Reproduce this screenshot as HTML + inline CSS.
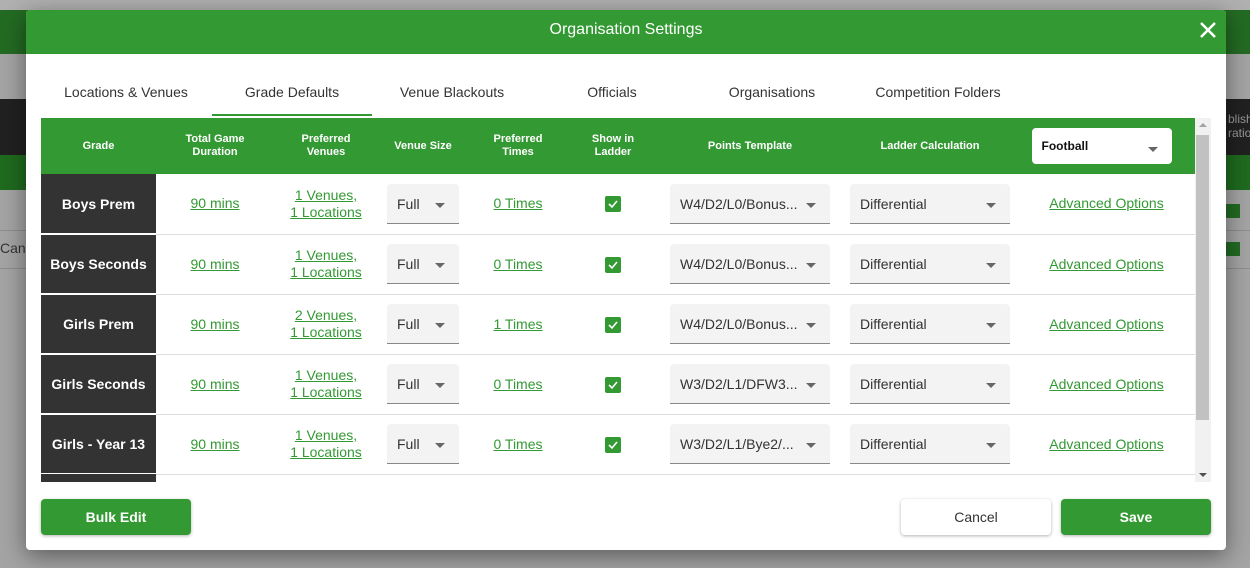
<!DOCTYPE html>
<html><head><meta charset="utf-8"><style>
*{box-sizing:border-box;margin:0;padding:0}
body{width:1250px;height:568px;overflow:hidden;background:#a4a4a4;font-family:"Liberation Sans",Arial,sans-serif;position:relative}
.abs{position:absolute}
.modal{position:absolute;left:26px;top:10px;width:1200px;height:540px;background:#fff;border-radius:4px;box-shadow:0 6px 24px rgba(0,0,0,.45);overflow:hidden}
.hdr{height:44px;background:#339933;color:#fff;font-size:16px;text-align:center;line-height:40px}
.x{position:absolute;right:8px;top:10px;width:20px;height:20px}
.tabs{position:absolute;top:72px;left:0;width:100%;font-size:14px;color:#333}
.tabs span{position:absolute;top:2px;transform:translateX(-50%);white-space:nowrap}
.ul{position:absolute;left:186px;top:104px;width:160px;height:2px;background:#339933}
table{position:absolute;left:15px;top:108px;border-collapse:collapse;table-layout:fixed;width:1154px}
th{background:#339933;color:#fff;font-size:11px;font-weight:bold;height:56px;text-align:center;line-height:13px}
td{height:60px;border-bottom:1px solid #ddd;text-align:center;font-size:14px;color:#333}
td.g{background:#333;color:#fff;font-weight:bold;border-bottom:2px solid #fff}
a{color:#339933;text-decoration:underline;font-size:14px;line-height:17px}
.sel{display:inline-block;position:relative;background:#f3f3f3;border-bottom:1px solid #888;border-radius:4px 4px 0 0;height:40px;text-align:left;padding-left:10px;line-height:41px;font-size:14px;color:#333;vertical-align:middle}
.sel:after{content:"";position:absolute;right:14px;top:19px;border-left:5px solid transparent;border-right:5px solid transparent;border-top:5px solid #666}
.cb{display:inline-block;width:16px;height:16px;background:#339933;border-radius:2px;vertical-align:middle;position:relative}
.cb svg{position:absolute;left:2px;top:2px}
.btn{position:absolute;top:489px;width:150px;height:36px;border-radius:4px;font-size:14px;text-align:center;line-height:36px;box-shadow:0 1px 3px rgba(0,0,0,.3)}
.g2{background:#339933;color:#fff;font-weight:bold}
</style></head><body>
<div class="abs" style="left:0;top:0;width:1250px;height:10px;background:#b0b0b0"></div>
<div class="abs" style="left:0;top:47px;width:1250px;height:1px;background:#8e8e8e"></div>
<div class="abs" style="left:0;top:20px;font-size:14px;color:#222">11:5</div>
<div class="abs" style="left:1226px;top:20px;font-size:14px;color:#1b4d1b;font-weight:bold">ush A</div>
<div class="abs" style="left:0;top:10px;width:1250px;height:44px;background:#236b23"></div>
<div class="abs" style="left:0;top:99px;width:1250px;height:56px;background:#212121"></div>
<div class="abs" style="left:1228px;top:112px;font-size:12px;color:#999;line-height:14px">blish<br>ratio</div>
<div class="abs" style="left:0;top:155px;width:1250px;height:35px;background:#1f6b1f"></div>
<div class="abs" style="left:0;top:230px;width:1250px;height:1px;background:#8e8e8e"></div>
<div class="abs" style="left:0;top:268px;width:1250px;height:1px;background:#8e8e8e"></div>
<div class="abs" style="left:0;top:240px;font-size:14px;color:#333">Can</div>
<div class="abs" style="left:1226px;top:204px;width:14px;height:14px;background:#236b23"></div>
<div class="abs" style="left:1226px;top:242px;width:14px;height:14px;background:#236b23"></div>
<div class="modal">
<div class="hdr">Organisation Settings
<svg class="x" viewBox="0 0 20 20"><path d="M3 3L17 17M17 3L3 17" stroke="#fff" stroke-width="2.6"/></svg></div>
<div class="tabs"><span style="left:100px">Locations &amp; Venues</span><span style="left:266px">Grade Defaults</span><span style="left:426px">Venue Blackouts</span><span style="left:586px">Officials</span><span style="left:746px">Organisations</span><span style="left:912px">Competition Folders</span></div>
<div class="ul"></div>
<table>
<colgroup><col style="width:115px"><col style="width:118px"><col style="width:104px"><col style="width:90px"><col style="width:100px"><col style="width:90px"><col style="width:184px"><col style="width:176px"><col style="width:177px"></colgroup>
<tr><th>Grade</th><th>Total Game<br>Duration</th><th>Preferred<br>Venues</th><th>Venue Size</th><th>Preferred<br>Times</th><th>Show in<br>Ladder</th><th>Points Template</th><th>Ladder Calculation</th><th><div class="sel" style="width:140px;height:36px;background:#fff;border:0;border-radius:4px;line-height:36px;font-size:12px;color:#111;font-weight:bold;margin-left:-10px">Football</div></th></tr>
<tr><td class="g">Boys Prem</td><td><a>90 mins</a></td><td><a>1 Venues,<br>1 Locations</a></td><td><div class="sel" style="width:72px">Full</div></td><td><a>0 Times</a></td><td><span class="cb"><svg width="12" height="12" viewBox="0 0 12 12"><path d="M2 6l3 3 5-6" stroke="#fff" stroke-width="1.6" fill="none"/></svg></span></td><td><div class="sel" style="width:160px">W4/D2/L0/Bonus...</div></td><td><div class="sel" style="width:160px">Differential</div></td><td><a>Advanced Options</a></td></tr>
<tr><td class="g">Boys Seconds</td><td><a>90 mins</a></td><td><a>1 Venues,<br>1 Locations</a></td><td><div class="sel" style="width:72px">Full</div></td><td><a>0 Times</a></td><td><span class="cb"><svg width="12" height="12" viewBox="0 0 12 12"><path d="M2 6l3 3 5-6" stroke="#fff" stroke-width="1.6" fill="none"/></svg></span></td><td><div class="sel" style="width:160px">W4/D2/L0/Bonus...</div></td><td><div class="sel" style="width:160px">Differential</div></td><td><a>Advanced Options</a></td></tr>
<tr><td class="g">Girls Prem</td><td><a>90 mins</a></td><td><a>2 Venues,<br>1 Locations</a></td><td><div class="sel" style="width:72px">Full</div></td><td><a>1 Times</a></td><td><span class="cb"><svg width="12" height="12" viewBox="0 0 12 12"><path d="M2 6l3 3 5-6" stroke="#fff" stroke-width="1.6" fill="none"/></svg></span></td><td><div class="sel" style="width:160px">W4/D2/L0/Bonus...</div></td><td><div class="sel" style="width:160px">Differential</div></td><td><a>Advanced Options</a></td></tr>
<tr><td class="g">Girls Seconds</td><td><a>90 mins</a></td><td><a>1 Venues,<br>1 Locations</a></td><td><div class="sel" style="width:72px">Full</div></td><td><a>0 Times</a></td><td><span class="cb"><svg width="12" height="12" viewBox="0 0 12 12"><path d="M2 6l3 3 5-6" stroke="#fff" stroke-width="1.6" fill="none"/></svg></span></td><td><div class="sel" style="width:160px">W3/D2/L1/DFW3...</div></td><td><div class="sel" style="width:160px">Differential</div></td><td><a>Advanced Options</a></td></tr>
<tr><td class="g">Girls - Year 13</td><td><a>90 mins</a></td><td><a>1 Venues,<br>1 Locations</a></td><td><div class="sel" style="width:72px">Full</div></td><td><a>0 Times</a></td><td><span class="cb"><svg width="12" height="12" viewBox="0 0 12 12"><path d="M2 6l3 3 5-6" stroke="#fff" stroke-width="1.6" fill="none"/></svg></span></td><td><div class="sel" style="width:160px">W3/D2/L1/Bye2/...</div></td><td><div class="sel" style="width:160px">Differential</div></td><td><a>Advanced Options</a></td></tr>
</table>
<div class="abs" style="left:15px;top:464px;width:115px;height:8px;background:#333"></div>
<div class="abs" style="left:1169px;top:108px;width:16px;height:364px;background:#f1f1f1"></div>
<div class="abs" style="left:1170px;top:125px;width:13px;height:285px;background:#c1c1c1"></div>
<div class="abs" style="left:1173px;top:113px;border-left:4px solid transparent;border-right:4px solid transparent;border-bottom:4px solid #a3a3a3"></div>
<div class="abs" style="left:1173px;top:463px;border-left:4px solid transparent;border-right:4px solid transparent;border-top:4px solid #505050"></div>
<div class="btn g2" style="left:15px">Bulk Edit</div>
<div class="btn" style="left:875px;background:#fff;color:#333">Cancel</div>
<div class="btn g2" style="left:1035px">Save</div>
</div>
</body></html>
